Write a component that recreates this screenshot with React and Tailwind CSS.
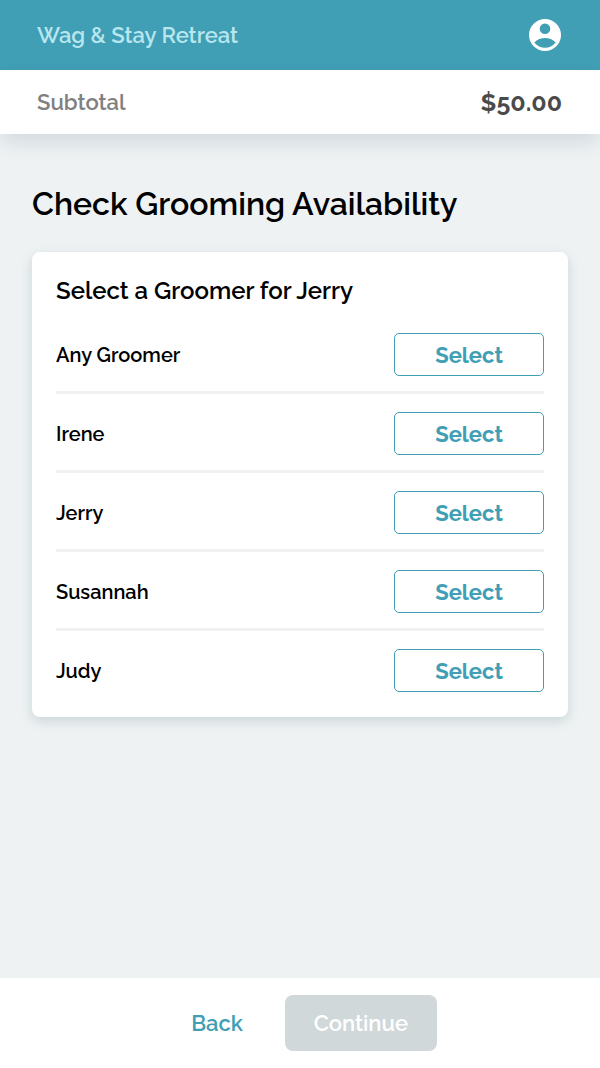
const groomers = ['Any Groomer', 'Irene', 'Jerry', 'Susannah', 'Judy'];

function AccountIcon() {
  return (
    <svg viewBox="0 0 32 32" className="size-8" aria-hidden="true">
      <path
        fill="#fff"
        fillRule="evenodd"
        d="M16 0a16 16 0 1 1 0 32a16 16 0 1 1 0-32zM16 4.4a5.3 5.3 0 1 0 0 10.6a5.3 5.3 0 1 0 0-10.6zM5.3 23.4C8 27 12 28.8 16 28.8s8-1.8 10.7-5.4C24 20.6 19.6 19.1 16 19.1s-8 1.5-10.7 4.3z"
      />
    </svg>
  );
}

export default function App() {
  return (
    <div className="flex min-h-screen flex-col bg-[#eef2f3] font-['Raleway','Lato',sans-serif] font-semibold text-black">
      <header className="flex h-[70px] items-center justify-between bg-[#409eb5] pr-[39px] pl-[37px]">
        <span className="text-[22px] leading-8 text-[#b8e6ef]">Wag &amp; Stay Retreat</span>
        <button type="button" aria-label="Account">
          <AccountIcon />
        </button>
      </header>
      <section className="flex h-16 items-center justify-between bg-white pr-[38px] pl-[37px] shadow-[0_10px_20px_-2px_rgba(70,85,110,0.16)]">
        <span className="text-[22px] leading-8 text-[#808080]">Subtotal</span>
        <span className="text-[25px] leading-8 font-bold text-[#4a4a4a]">$50.00</span>
      </section>
      <main className="flex-1 px-8 pt-12 pb-12">
        <h1 className="text-[32px] leading-[44px]">Check Grooming Availability</h1>
        <section className="mt-[26px] rounded-lg bg-white px-6 pt-[22px] pb-[25px] shadow-[0_4px_12px_rgba(60,100,110,0.2)]">
          <h2 className="text-[24px] leading-[34px]">Select a Groomer for Jerry</h2>
          <ul className="mt-[7px] divide-y-[3px] divide-[#f1f1f1]">
            {groomers.map((name) => (
              <li key={name} className="flex items-center justify-between pt-[18px] pb-[15px] last:pb-0">
                <span className="text-[20px] leading-7">{name}</span>
                <button
                  type="button"
                  aria-label={`Select ${name}`}
                  className="h-[43px] w-[150px] rounded-[5px] border border-[#409eb5] text-[22px] leading-8 font-bold text-[#409eb5]"
                >
                  Select
                </button>
              </li>
            ))}
          </ul>
        </section>
      </main>
      <footer className="flex h-[90px] items-center justify-center gap-[42px] bg-white pl-7">
        <button type="button" className="h-14 text-[22px] leading-8 text-[#409eb5]">
          Back
        </button>
        <button type="button" disabled className="h-14 w-[152px] rounded-lg bg-[#d0d8da] text-[22px] leading-8 text-white">
          Continue
        </button>
      </footer>
    </div>
  );
}
